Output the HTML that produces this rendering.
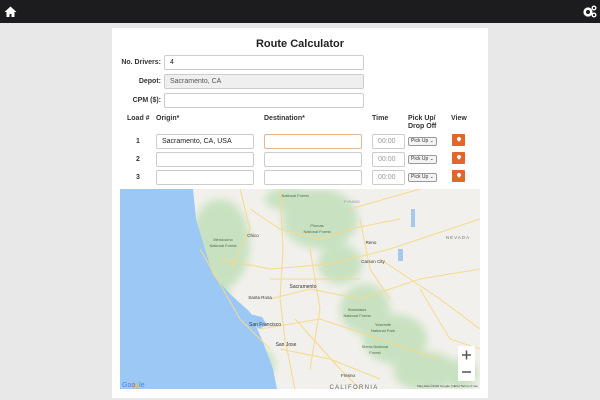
<!DOCTYPE html>
<html><head><style>
*{margin:0;padding:0;box-sizing:border-box}
body{width:600px;height:400px;background:#e9e8e9;font-family:"Liberation Sans",Arial,sans-serif;position:relative;overflow:hidden;color:#222}
.top{position:absolute;left:0;top:0;width:600px;height:23px;background:#1c1b1d}
.card{position:absolute;left:112px;top:28px;width:376px;height:370px;background:#fff}
.a{position:absolute}
.lbl{font-size:7px;font-weight:bold;color:#333;text-align:right;width:60px}
.in{position:absolute;border:1px solid #ccc;border-radius:2px;background:#fff;height:15px;font-size:7px;padding-left:5px;line-height:13px;color:#222}
.h{font-size:7px;font-weight:bold;color:#333;position:absolute}
.sel{position:absolute;border:1px solid #999;border-radius:2px;font-size:5px;height:9px;width:29px;line-height:7px;padding-left:2px;color:#333;background:#f4f4f4}
.btn{position:absolute;width:13px;height:12px;background:#e0662a;border-radius:1px}
.btn:after{content:"";position:absolute;left:4.5px;top:3px;width:4px;height:4px;background:#fff;border-radius:50% 50% 50% 0;transform:rotate(-45deg)}
.tm{color:#999;width:33px}
</style></head><body>
<div class="top">
<svg class="a" style="left:4px;top:6px" width="13" height="11" viewBox="0 0 13 11"><path d="M6.5 0.5L0.5 6h2v5h3V8h2v3h3V6h2z" fill="#fff"/></svg>
<svg class="a" style="left:583px;top:5px" width="14" height="13" viewBox="0 0 14 13"><circle cx="5" cy="7" r="3.3" fill="none" stroke="#fff" stroke-width="2.6"/><circle cx="5" cy="7" r="1" fill="#1c1b1d"/><circle cx="11" cy="3" r="1.8" fill="none" stroke="#fff" stroke-width="1.4"/><circle cx="11" cy="10" r="1.8" fill="none" stroke="#fff" stroke-width="1.4"/></svg>
</div>
<div class="card"></div>
<div class="a" style="left:200px;top:38px;width:200px;text-align:center;font-size:11px;font-weight:bold;color:#222">Route Calculator</div>
<div class="a lbl" style="left:101px;top:59px">No. Drivers:</div>
<div class="in" style="left:164px;top:55px;width:200px">4</div>
<div class="a lbl" style="left:101px;top:78px">Depot:</div>
<div class="in" style="left:164px;top:74px;width:200px;background:#efefef;color:#555">Sacramento, CA</div>
<div class="a lbl" style="left:101px;top:97px">CPM ($):</div>
<div class="in" style="left:164px;top:93px;width:200px"></div>
<div class="h" style="left:127px;top:115px">Load #</div>
<div class="h" style="left:156px;top:115px">Origin*</div>
<div class="h" style="left:264px;top:115px">Destination*</div>
<div class="h" style="left:372px;top:115px">Time</div>
<div class="h" style="left:408px;top:115px;line-height:8px">Pick Up/<br>Drop Off</div>
<div class="h" style="left:451px;top:115px">View</div>

<div class="h" style="left:136px;top:138px">1</div>
<div class="in" style="left:156px;top:134px;width:98px">Sacramento, CA, USA</div>
<div class="in" style="left:264px;top:134px;width:98px;border-color:#e8b48f"></div>
<div class="in tm" style="left:372px;top:134px">00:00</div>
<div class="sel" style="left:408px;top:137px">Pick Up ⌄</div>
<div class="btn" style="left:452px;top:134px"></div>

<div class="h" style="left:136px;top:156px">2</div>
<div class="in" style="left:156px;top:152px;width:98px"></div>
<div class="in" style="left:264px;top:152px;width:98px"></div>
<div class="in tm" style="left:372px;top:152px">00:00</div>
<div class="sel" style="left:408px;top:155px">Pick Up ⌄</div>
<div class="btn" style="left:452px;top:152px"></div>

<div class="h" style="left:136px;top:174px">3</div>
<div class="in" style="left:156px;top:170px;width:98px"></div>
<div class="in" style="left:264px;top:170px;width:98px"></div>
<div class="in tm" style="left:372px;top:170px">00:00</div>
<div class="sel" style="left:408px;top:173px">Pick Up ⌄</div>
<div class="btn" style="left:452px;top:170px"></div>

<svg class="a" style="left:120px;top:189px" width="360" height="200" viewBox="0 0 360 200">
<defs><filter id="b"><feGaussianBlur stdDeviation="4"/></filter></defs>
<rect width="360" height="200" fill="#f2f0ec"/>
<g fill="#c8e2c1" filter="url(#b)">
<ellipse cx="100" cy="55" rx="30" ry="45"/>
<ellipse cx="200" cy="30" rx="38" ry="30"/>
<ellipse cx="170" cy="10" rx="25" ry="12"/>
<ellipse cx="220" cy="75" rx="22" ry="20"/>
<ellipse cx="245" cy="120" rx="25" ry="25"/>
<ellipse cx="275" cy="150" rx="32" ry="25"/>
<ellipse cx="305" cy="182" rx="32" ry="20"/>
<ellipse cx="92" cy="105" rx="18" ry="15"/>
<ellipse cx="140" cy="175" rx="15" ry="15"/>
<ellipse cx="340" cy="185" rx="18" ry="15"/>
</g>
<path d="M0 0H73L76 30L85 60L93 86L110 105L130 123L143 153L153 180L157 200H0Z" fill="#9cc8f6"/>
<path d="M130 125l12 3 5 8 -8 4 -6 -6z" fill="#9cc8f6"/>
<g fill="none" stroke="#f6d98b" stroke-width="1">
<path d="M160 0L163 60L160 110L165 150L175 200"/>
<path d="M100 70L150 80L210 75L270 60L330 40L360 30"/>
<path d="M150 110L190 100L240 110L300 90L360 80"/>
<path d="M140 140L200 130L260 150L320 170"/>
<path d="M175 130L220 180L240 200"/>
<path d="M130 20L160 40L200 50L230 40L280 30"/>
<path d="M80 60L120 130L150 160"/>
<path d="M230 20L300 0"/>
<path d="M260 70L320 110L360 140"/>
<path d="M120 0L130 40L110 80"/>
<path d="M190 60L200 120L190 180"/>
<path d="M160 160L210 170L260 190"/>
<path d="M300 100L330 150L360 160"/>
<path d="M150 90L240 90"/>
<path d="M240 30L250 80L270 110"/>
</g>
<rect x="291" y="20" width="4" height="18" fill="#a5c8ef"/><rect x="278" y="60" width="5" height="12" fill="#a5c8ef"/>
<g font-family="Liberation Sans,sans-serif" font-size="4" fill="#4a6e4a" text-anchor="middle">
<text x="103" y="52">Mendocino</text><text x="103" y="58">National Forest</text>
<text x="175" y="8">National Forest</text>
<text x="197" y="38">Plumas</text><text x="197" y="44">National Forest</text>
<text x="237" y="122">Stanislaus</text><text x="237" y="128">National Forest</text>
<text x="263" y="137">Yosemite</text><text x="263" y="143">National Park</text>
<text x="255" y="159">Sierra National</text><text x="255" y="165">Forest</text>
</g>
<g font-family="Liberation Sans,sans-serif" font-size="4.5" fill="#333" text-anchor="middle">
<text x="183" y="99" font-size="5">Sacramento</text>
<text x="140" y="110">Santa Rosa</text>
<text x="145" y="137" font-size="5">San Francisco</text>
<text x="166" y="157" font-size="5">San Jose</text>
<text x="133" y="48">Chico</text>
<text x="251" y="55">Reno</text>
<text x="253" y="74">Carson City</text>
<text x="228" y="188">Fresno</text>
<text x="338" y="50" fill="#777" letter-spacing="1">NEVADA</text>
<text x="234" y="200" fill="#666" font-size="6" letter-spacing="1.3">CALIFORNIA</text>
<text x="232" y="14" fill="#999" font-size="3.5">PYRAMID</text>
</g>
<text x="2" y="198" font-family="Liberation Sans,sans-serif" font-size="7" fill="#4285f4">Go<tspan fill="#ea4335">o</tspan><tspan fill="#fbbc05">g</tspan>le</text>
<text x="358" y="198" text-anchor="end" font-family="Liberation Sans,sans-serif" font-size="3" fill="#444">Map data ©2020 Google, INEGI  Terms of Use</text>
<rect x="338" y="157" width="17" height="35" fill="#fff"/>
<path d="M342 166h9M346.5 161.5v9M342 183h9" stroke="#555" stroke-width="1.5"/>
</svg>
</body></html>
